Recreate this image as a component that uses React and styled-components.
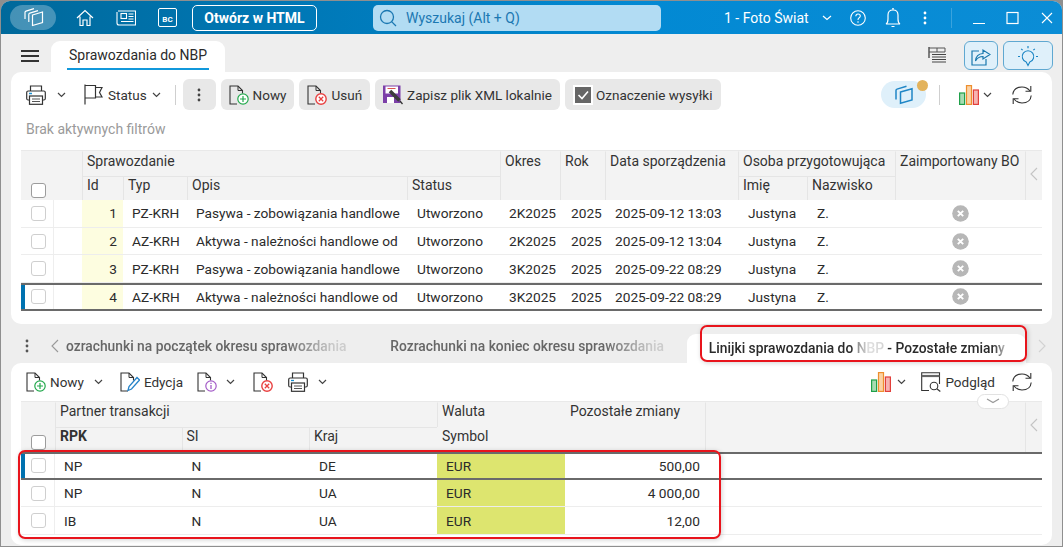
import React from "react";
import styled, { createGlobalStyle } from "styled-components";

const GlobalStyle = createGlobalStyle`
  html, body {
    margin: 0;
    padding: 0;
    height: 100%;
    overflow: hidden;
    background: #8f8f8f;
  }
  body {
    font-family: Roboto, "Liberation Sans", sans-serif;
    font-size: 14px;
    color: #2b2b2b;
  }
  * { box-sizing: border-box; }
`;

const Window = styled.div`
  position: relative;
  margin: 1px 1px 0 1px;
  height: 545px;
  background: #eeeeee;
  border-radius: 9px 9px 0 0;
  overflow: hidden;
  display: flex;
  flex-direction: column;
`;

const TitleBar = styled.header`
  height: 33px;
  flex: none;
  display: flex;
  align-items: center;
  padding-left: 9px;
  color: #fff;
  background: linear-gradient(90deg, #00699b 0%, #0079b8 30%, #0289d3 60%, #0b8dd6 100%);
`;

const LogoPill = styled.div`
  width: 46px;
  height: 25px;
  border-radius: 13px;
  background: rgba(255, 255, 255, 0.27);
  display: flex;
  align-items: center;
  justify-content: center;
`;

const TitleIcon = styled.div`
  margin-left: ${(p) => p.$ml}px;
  display: flex;
  align-items: center;
`;

const BcBadge = styled.div`
  margin-left: 22px;
  width: 19px;
  height: 19px;
  border: 1.3px solid #fff;
  border-radius: 2px;
  font-size: 8px;
  font-weight: 700;
  display: flex;
  align-items: flex-end;
  justify-content: center;
  padding-bottom: 2px;
`;

const HtmlButton = styled.button`
  margin-left: 15px;
  width: 125px;
  height: 26px;
  border: 1.5px solid #fff;
  border-radius: 5px;
  background: transparent;
  color: #fff;
  font: 700 14px Roboto, sans-serif;
  padding: 0;
`;

const SearchBox = styled.div`
  margin-left: 56px;
  width: 288px;
  height: 26px;
  border-radius: 5px;
  background: #b2dcf3;
  color: #1b78b2;
  display: flex;
  align-items: center;
  gap: 9px;
  padding-left: 6px;
`;

const Company = styled.span`
  margin-left: 63px;
  width: 83px;
  white-space: nowrap;
`;

const Divider = styled.div`
  width: 1px;
  height: 20px;
  margin-left: ${(p) => p.$ml}px;
  background: ${(p) => p.$color || "#cfcfcf"};
`;

const TabStrip = styled.div`
  height: 38px;
  flex: none;
  display: flex;
  align-items: flex-end;
  padding-left: 20px;
`;

const Hamburger = styled.div`
  width: 18px;
  height: 12px;
  margin-bottom: 10px;
  border-top: 2px solid #333;
  border-bottom: 2px solid #333;
  position: relative;
  &::after {
    content: "";
    position: absolute;
    left: 0;
    right: 0;
    top: 3px;
    height: 2px;
    background: #333;
  }
`;

const MainTab = styled.div`
  margin-left: 12px;
  width: 174px;
  height: 31px;
  background: #fff;
  border-radius: 9px 9px 0 0;
  padding: 6px 16px 0;
  display: flex;
  flex-direction: column;
  align-items: flex-start;
  white-space: nowrap;
  font-size: 14px;
  &::after {
    content: "";
    display: block;
    width: 142px;
    margin-top: 5px;
    height: 2px;
    background: #1198db;
  }
`;

const MainTabLabel = styled.span`
  padding-left: 2px;
`;

const StripActions = styled.div`
  margin-left: auto;
  margin-right: 9px;
  align-self: stretch;
  display: flex;
  align-items: center;
  padding-top: 5px;
`;

const SoftButton = styled.div`
  width: ${(p) => p.$w}px;
  height: 29px;
  margin-left: ${(p) => p.$ml}px;
  border: 1px solid #5fa8d1;
  border-radius: 6px;
  background: #dff0fa;
  display: flex;
  align-items: center;
  justify-content: center;
`;

const Panel = styled.section`
  position: relative;
  margin: 0 10px 0 10px;
  background: #fff;
  border-radius: 10px;
  flex: none;
  height: ${(p) => p.$h}px;
  padding: 0 10px;
  padding-top: ${(p) => p.$pt}px;
`;

const Toolbar = styled.div`
  height: ${(p) => p.$h}px;
  display: flex;
  align-items: center;
  padding-left: 5px;
  padding-right: 10px;
  font-size: 13.5px;
`;

const Tool = styled.div`
  display: flex;
  align-items: center;
  flex: none;
  height: 31px;
  gap: ${(p) => p.$gap ?? 4}px;
  margin-left: ${(p) => p.$ml ?? 0}px;
  padding: 0 ${(p) => (p.$filled ? 8 : 0)}px;
  background: ${(p) => (p.$filled ? "#e8e8e8" : "transparent")};
  border-radius: 6px;
  white-space: nowrap;
  color: #333;
`;

const DotsTool = styled(Tool)`
  width: 33px;
  justify-content: center;
`;

const RightTools = styled.div`
  margin-left: auto;
  display: flex;
  align-items: center;
`;

const SyncPill = styled.div`
  position: relative;
  width: 45px;
  height: 27px;
  border-radius: 14px;
  background: #dff0fa;
  display: flex;
  align-items: center;
  justify-content: center;
  &::after {
    content: "";
    position: absolute;
    right: -2px;
    top: -1px;
    width: 11px;
    height: 11px;
    border-radius: 50%;
    background: #e3b35c;
  }
`;

const FilterNote = styled.div`
  height: 40px;
  padding-left: 5px;
  padding-top: 11px;
  color: #9a9a9a;
  font-size: 14px;
`;

const HeadGrid = styled.div`
  display: grid;
  grid-template-columns: ${(p) => p.$cols};
  grid-template-rows: ${(p) => p.$rows};
  background: #f3f3f3;
  border-top: 1px solid #e9e9e9;
`;

const HeadCell = styled.div`
  grid-column: ${(p) => p.$col};
  grid-row: ${(p) => p.$row};
  padding: ${(p) => (p.$sub ? 0 : 0.5)}px 0 0 4px;
  border-left: 1.5px solid ${(p) => (p.$plain ? "transparent" : "#e5e5e5")};
  border-top: 1.5px solid ${(p) => (p.$sub ? "#e5e5e5" : "transparent")};
  white-space: nowrap;
  overflow: hidden;
  color: #333;
  font-weight: ${(p) => (p.$bold ? 700 : 400)};
  display: flex;
  align-items: ${(p) => (p.$bottom ? "flex-end" : "flex-start")};
`;

const ScrollCell = styled(HeadCell)`
  align-items: center;
  padding: 0 0 4px 4px;
`;

const Row = styled.div`
  position: relative;
  display: grid;
  grid-template-columns: ${(p) => p.$cols};
  height: 27.7px;
  align-items: stretch;
  font-size: 13.7px;
  border-bottom: 1px solid ${(p) => (p.$selected ? "#6a6a6a" : "#ededed")};
  ${(p) =>
    p.$selected &&
    `
    border-top: 2px solid #6a6a6a;
    border-bottom-width: 2px;
    &::before {
      content: "";
      position: absolute;
      left: 0;
      top: 0;
      bottom: 0;
      width: 4px;
      background: #0072b0;
    }
  `}
`;

const Cell = styled.div`
  display: flex;
  align-items: center;
  justify-content: ${(p) => (p.$right ? "flex-end" : p.$center ? "center" : "flex-start")};
  padding: 0 ${(p) => p.$pr ?? 0}px 0 ${(p) => p.$pl ?? 0}px;
  background: ${(p) => p.$bg || "transparent"};
  white-space: nowrap;
  overflow: hidden;
  border-right: ${(p) => (p.$line ? "1px solid #eeeeee" : "none")};
  color: #2b2b2b;
`;

const Check = styled.span`
  width: 15px;
  height: 15px;
  flex: none;
  border: 1px solid ${(p) => (p.$head ? "#9c9c9c" : "#cfcfcf")};
  border-radius: 3px;
  background: #fff;
`;

const HeadCheck = styled(Check)`
  margin: 0 0 2.5px 5px;
`;

const SubTabs = styled.div`
  height: 38.5px;
  flex: none;
  display: flex;
  align-items: flex-end;
  padding-left: 21px;
  color: #666;
  font-size: 13.8px;
  font-weight: 500;
`;

const SubTabIcon = styled.div`
  align-self: center;
  margin-top: 5px;
  margin-left: ${(p) => p.$ml}px;
  display: flex;
  align-items: center;
`;

const SubTabLabel = styled.div`
  align-self: center;
  margin-top: 5px;
  white-space: nowrap;
  margin-left: ${(p) => p.$ml}px;
  mask-image: linear-gradient(90deg, #000 78%, rgba(0, 0, 0, 0.25) 96%);
`;

const ActiveTab = styled.div`
  margin-left: 23px;
  width: 339px;
  height: 29px;
  background: #fff;
  border-radius: 9px 9px 0 0;
  padding: 0 0 0 22px;
  display: flex;
  align-items: center;
  white-space: nowrap;
  color: #2b2b2b;
`;

const ActiveLabel = styled.span`
  mask-image: linear-gradient(
    90deg,
    #000 48%,
    rgba(0, 0, 0, 0.55) 50%,
    rgba(0, 0, 0, 0.15) 54%,
    rgba(0, 0, 0, 0.2) 59%,
    #000 60%,
    #000 96%,
    rgba(0, 0, 0, 0.3) 100%
  );
`;

const CollapsePill = styled.div`
  position: absolute;
  left: 966px;
  top: 31px;
  width: 32px;
  height: 15px;
  border: 1px solid #e2e2e2;
  border-radius: 8px;
  background: #fff;
  display: flex;
  align-items: center;
  justify-content: center;
`;

const Annotation = styled.div`
  position: absolute;
  left: ${(p) => p.$x}px;
  top: ${(p) => p.$y}px;
  width: ${(p) => p.$w}px;
  height: ${(p) => p.$h}px;
  border: 2px solid #e8141c;
  border-radius: 7px;
  box-shadow: 1px 1px 5px rgba(0, 0, 0, 0.18);
  pointer-events: none;
`;

/* icons */
const Svg = ({ w = 20, h = 20, children, ...rest }) => (
  <svg width={w} height={h} viewBox={`0 0 ${w} ${h}`} fill="none" {...rest}>
    {children}
  </svg>
);

const Chevron = ({ color = "#444", w = 9 }) => (
  <Svg w={w} h={6}>
    <path d={`M1 1 L${w / 2} 4.5 L${w - 1} 1`} stroke={color} strokeWidth="1.2" />
  </Svg>
);

const Side = ({ dir = "left", color = "#c4c4c4" }) => (
  <Svg w={8} h={14}>
    <path d={dir === "left" ? "M7 1 L1 7 L7 13" : "M1 1 L7 7 L1 13"} stroke={color} strokeWidth="1.1" />
  </Svg>
);

const LogoIcon = () => (
  <Svg w={21} h={21}>
    <path d="M9.5 8 L19.5 5 V15.5 L9.5 18.5 Z" stroke="#fff" strokeWidth="1.2" />
    <path d="M5.8 15 V7.5 Q5.8 6.4 6.8 6.1 L15 3.6" stroke="#fff" strokeWidth="1.2" />
    <path d="M2 12 V5.5 Q2 4.4 3 4.1 L11 1.6" stroke="#fff" strokeWidth="1.2" />
  </Svg>
);

const SyncIcon = () => (
  <Svg w={21} h={21}>
    <path d="M7.5 8 L19 4.8 V16 L7.5 19.2 Z" stroke="#1f86c6" strokeWidth="1.5" />
    <path d="M3 15.5 V6.5 Q3 5.4 4 5.1 L13.5 2.2" stroke="#1f86c6" strokeWidth="1.5" />
  </Svg>
);

const HomeIcon = () => (
  <Svg w={18} h={18}>
    <path d="M1 9 L9 1.5 L17 9 M4 7.5 V16.5 H7 V11 H11 V16.5 H14 V7.5" stroke="#fff" strokeWidth="1.2" />
  </Svg>
);

const NewsIcon = () => (
  <Svg w={20} h={17}>
    <path d="M2 2 H19.5 V16 H3 Q1 16 1 14 V3" stroke="#fff" strokeWidth="1.1" />
    <rect x="5" y="4.5" width="5.5" height="5" stroke="#fff" strokeWidth="1.1" />
    <path d="M12.5 5 H17.5 M12.5 7.5 H17.5 M12.5 10 H17.5 M5 12.5 H17.5" stroke="#fff" strokeWidth="1.1" />
  </Svg>
);

const SearchIcon = () => (
  <Svg w={18} h={18}>
    <circle cx="8" cy="8" r="6.5" stroke="#1b78b2" strokeWidth="1.3" />
    <path d="M12.6 12.6 L17 17" stroke="#1b78b2" strokeWidth="1.3" />
  </Svg>
);

const HelpIcon = () => (
  <Svg w={16} h={16}>
    <circle cx="8" cy="8" r="7.3" stroke="#fff" strokeWidth="1.1" />
    <path d="M5.8 6.2 Q6 4 8 4 Q10.3 4 10.3 6 Q10.3 7.2 9 7.9 Q8 8.5 8 10" stroke="#fff" strokeWidth="1.1" />
    <circle cx="8" cy="12" r="0.8" fill="#fff" />
  </Svg>
);

const BellIcon = () => (
  <Svg w={16} h={20}>
    <path d="M1 16 Q3 15 3 11 V7 Q3 2 8 2 Q13 2 13 7 V11 Q13 15 15 16 Z" stroke="#fff" strokeWidth="1.2" />
    <path d="M7 0.8 H9 M6.5 18.5 H9.5" stroke="#fff" strokeWidth="1.2" />
  </Svg>
);

const DotsIcon = ({ color = "#fff" }) => (
  <Svg w={4} h={14}>
    <circle cx="2" cy="2" r="1.4" fill={color} />
    <circle cx="2" cy="7" r="1.4" fill={color} />
    <circle cx="2" cy="12" r="1.4" fill={color} />
  </Svg>
);

const WindowIcons = () => (
  <>
    <TitleIcon $ml={21}>
      <Svg w={12} h={14}>
        <path d="M0 12.5 H12" stroke="#fff" strokeWidth="1.1" />
      </Svg>
    </TitleIcon>
    <TitleIcon $ml={21}>
      <Svg w={13} h={14}>
        <rect x="1" y="1.5" width="11" height="11" stroke="#fff" strokeWidth="1.2" />
      </Svg>
    </TitleIcon>
    <TitleIcon $ml={22}>
      <Svg w={12} h={12}>
        <path d="M1 1 L11 11 M11 1 L1 11" stroke="#fff" strokeWidth="1.1" />
      </Svg>
    </TitleIcon>
  </>
);

const ColumnsIcon = () => (
  <Svg w={18} h={17}>
    <path d="M1 0 V11" stroke="#333" strokeWidth="1.2" />
    <path d="M1 1 H17 V5 H1" stroke="#555" strokeWidth="1" />
    <path d="M9 1 V5" stroke="#555" strokeWidth="1" />
    <path d="M4 7.5 H18 M4 10 H18 M4 12.5 H18 M4 15 H18" stroke="#444" strokeWidth="1.2" />
  </Svg>
);

const ShareIcon = () => (
  <Svg w={20} h={20}>
    <path d="M8 5 H1 V19 H15 V13" stroke="#1877ad" strokeWidth="1.2" />
    <path d="M4.5 15 Q5 8 12 7.5 V4 L19 8.5 L12 13 V10.5 Q7 10.5 4.5 15 Z" stroke="#1877ad" strokeWidth="1.2" />
  </Svg>
);

const LampIcon = () => (
  <Svg w={22} h={22}>
    <path d="M11 20.5 L9.2 17 A5.8 5.8 0 1 1 12.8 17 Z" stroke="#1b85c4" strokeWidth="1.1" />
    <path d="M11 1 V3.2 M4.2 3.8 L5.6 5.2 M17.8 3.8 L16.4 5.2 M1 11.5 H3 M19 11.5 H21" stroke="#1b85c4" strokeWidth="1.2" />
  </Svg>
);

const PrintIcon = () => (
  <Svg w={20} h={20}>
    <path d="M4.5 6 V1 H15.5 V6" stroke="#333" strokeWidth="1.2" />
    <rect x="0.7" y="6" width="18.6" height="9" rx="1.5" stroke="#333" strokeWidth="1.2" />
    <rect x="3.5" y="11" width="13" height="8.3" fill="#fff" stroke="#333" strokeWidth="1.2" />
    <path d="M6 14 H14 M6 16.5 H14" stroke="#555" strokeWidth="1" />
    <path d="M3 8.5 H6" stroke="#1a8fd1" strokeWidth="1.3" />
  </Svg>
);

const FlagIcon = () => (
  <Svg w={19} h={21}>
    <path d="M1 0.5 V20.5" stroke="#333" strokeWidth="1.2" />
    <path d="M1 1.5 H11.5 V14 H1" stroke="#333" strokeWidth="1.2" />
    <path d="M11.5 3.5 H18 L15.5 8.5 L18 13 H11.5" stroke="#333" strokeWidth="1.2" />
  </Svg>
);

const DocIcon = ({ badge }) => (
  <Svg w={20} h={20}>
    <path d="M8 19 H1 V1 H9 L13.5 5.5 V8.5" stroke="#333" strokeWidth="1.1" />
    <path d="M9 1 V5.5 H13.5" stroke="#333" strokeWidth="1" />
    {badge === "add" && (
      <>
        <circle cx="14" cy="14" r="5.2" fill="#fff" stroke="#22a84c" strokeWidth="1.2" />
        <path d="M14 11 V17 M11 14 H17" stroke="#22a84c" strokeWidth="1.2" />
      </>
    )}
    {badge === "remove" && (
      <>
        <circle cx="14" cy="14" r="5.2" fill="#fff" stroke="#e84040" strokeWidth="1.4" />
        <path d="M11.8 11.8 L16.2 16.2 M16.2 11.8 L11.8 16.2" stroke="#e84040" strokeWidth="1.3" />
      </>
    )}
    {badge === "info" && (
      <>
        <circle cx="14" cy="14" r="5.2" fill="#fff" stroke="#a45cc8" strokeWidth="1.2" />
        <path d="M14 13 V17 M14 10.8 V11.9" stroke="#a45cc8" strokeWidth="1.3" />
      </>
    )}
    {badge === "edit" && (
      <path d="M8 18.5 L9 14.5 L17 5.5 L19.5 8 L11.5 17 Z" fill="#fff" stroke="#2583c9" strokeWidth="1.3" />
    )}
  </Svg>
);

const SaveXmlIcon = () => (
  <Svg w={20} h={20}>
    <rect x="0" y="0.5" width="17.5" height="17.5" fill="#7c3fa8" />
    <rect x="2.5" y="1.5" width="12.5" height="7" fill="#fff" />
    <path d="M4.5 3.5 H12.5" stroke="#d9534f" strokeWidth="1" />
    <rect x="4" y="12" width="7" height="6" fill="#fff" />
    <path d="M7 6 L16.5 15.5" stroke="#3c3c3c" strokeWidth="3.6" />
    <path d="M17 16 L19.5 19" stroke="#333" strokeWidth="1.3" />
  </Svg>
);

const CheckedIcon = () => (
  <Svg w={20} h={20}>
    <rect width="20" height="20" fill="#fff" />
    <rect x="2" y="2" width="16" height="16" fill="#666" />
    <path d="M5.5 10 L9 13.5 L15 6.5" stroke="#fff" strokeWidth="1.6" />
  </Svg>
);

const ChartIcon = () => (
  <Svg w={20} h={20}>
    <rect x="0.6" y="8" width="5" height="11.4" fill="#a6dcb2" stroke="#1fa04a" strokeWidth="1.2" />
    <rect x="7.5" y="0.6" width="5" height="18.8" fill="#fbd3a6" stroke="#ee8f2e" strokeWidth="1.2" />
    <rect x="14.4" y="5" width="5" height="14.4" fill="#f6b3b1" stroke="#e23f3b" strokeWidth="1.2" />
  </Svg>
);

const RefreshIcon = () => (
  <Svg w={20} h={20}>
    <path d="M0.8 9.5 Q1.5 2 10 2 Q15 2 18 6" stroke="#333" strokeWidth="1.1" />
    <path d="M18.8 1 V6.3 H13.5" stroke="#333" strokeWidth="1.1" />
    <path d="M19.2 10.5 Q18.5 18 10 18 Q5 18 2 14" stroke="#333" strokeWidth="1.1" />
    <path d="M1.2 19 V13.7 H6.5" stroke="#333" strokeWidth="1.1" />
  </Svg>
);

const PreviewIcon = () => (
  <Svg w={20} h={20}>
    <path d="M8 18.5 H0.7 V0.7 H18.5 V12" stroke="#333" strokeWidth="1.1" />
    <path d="M0.7 4 H18.5" stroke="#666" strokeWidth="2.2" />
    <circle cx="13" cy="14" r="3.8" stroke="#333" strokeWidth="1.1" />
    <path d="M15.8 16.8 L19.3 19.5" stroke="#333" strokeWidth="1.2" />
  </Svg>
);

const CrossDisc = () => (
  <Svg w={17} h={17}>
    <circle cx="8.5" cy="8.5" r="8.3" fill="#b7b7b7" />
    <path d="M5.8 5.8 L11.2 11.2 M11.2 5.8 L5.8 11.2" stroke="#fff" strokeWidth="1.9" />
  </Svg>
);

const topCols = "33px 28px 41px 64px 220px 93px 60px 45px 133px 69px 88px 130px 17px";
const bottomCols = "34px 126.5px 127.5px 128px 128px 140px 320px 17px";

const reports = [
  { id: 1, typ: "PZ-KRH", opis: "Pasywa - zobowiązania handlowe", okres: "2K2025", data: "2025-09-12 13:03" },
  { id: 2, typ: "AZ-KRH", opis: "Aktywa - należności handlowe od", okres: "2K2025", data: "2025-09-12 13:04" },
  { id: 3, typ: "PZ-KRH", opis: "Pasywa - zobowiązania handlowe", okres: "3K2025", data: "2025-09-22 08:29" },
  { id: 4, typ: "AZ-KRH", opis: "Aktywa - należności handlowe od", okres: "3K2025", data: "2025-09-22 08:29", selected: true },
];

const lines = [
  { rpk: "NP", si: "N", kraj: "DE", kwota: "500,00", selected: true },
  { rpk: "NP", si: "N", kraj: "UA", kwota: "4 000,00" },
  { rpk: "IB", si: "N", kraj: "UA", kwota: "12,00" },
];

export default function App() {
  return (
    <>
      <GlobalStyle />
      <Window>
        <TitleBar>
          <LogoPill>
            <LogoIcon />
          </LogoPill>
          <TitleIcon $ml={20}>
            <HomeIcon />
          </TitleIcon>
          <TitleIcon $ml={22}>
            <NewsIcon />
          </TitleIcon>
          <BcBadge>BC</BcBadge>
          <HtmlButton>Otwórz w HTML</HtmlButton>
          <SearchBox>
            <SearchIcon />
            <span>Wyszukaj (Alt + Q)</span>
          </SearchBox>
          <Company>1 - Foto Świat</Company>
          <TitleIcon $ml={15}>
            <Chevron color="#fff" w={10} />
          </TitleIcon>
          <TitleIcon $ml={18}>
            <HelpIcon />
          </TitleIcon>
          <TitleIcon $ml={19}>
            <BellIcon />
          </TitleIcon>
          <TitleIcon $ml={22}>
            <DotsIcon />
          </TitleIcon>
          <Divider $ml={24} $color="rgba(255,255,255,0.2)" />
          <WindowIcons />
        </TitleBar>

        <TabStrip>
          <Hamburger />
          <MainTab>
            <MainTabLabel>Sprawozdania do NBP</MainTabLabel>
          </MainTab>
          <StripActions>
            <TitleIcon $ml={0}>
              <ColumnsIcon />
            </TitleIcon>
            <SoftButton $w={34} $ml={18}>
              <ShareIcon />
            </SoftButton>
            <SoftButton $w={50} $ml={5}>
              <LampIcon />
            </SoftButton>
          </StripActions>
        </TabStrip>

        <Panel $h={252} $pt={7}>
          <Toolbar $h={31}>
            <Tool $gap={11}>
              <PrintIcon />
              <Chevron />
            </Tool>
            <Tool $ml={18} $gap={5}>
              <FlagIcon />
              Status
              <Chevron />
            </Tool>
            <Divider $ml={14} />
            <DotsTool $ml={7} $filled>
              <DotsIcon color="#444" />
            </DotsTool>
            <Tool $ml={5} $filled>
              <DocIcon badge="add" />
              Nowy
            </Tool>
            <Tool $ml={5} $filled>
              <DocIcon badge="remove" />
              Usuń
            </Tool>
            <Tool $ml={5} $filled>
              <SaveXmlIcon />
              Zapisz plik XML lokalnie
            </Tool>
            <Tool $ml={5} $filled $gap={3}>
              <CheckedIcon />
              Oznaczenie wysyłki
            </Tool>
            <RightTools>
              <SyncPill>
                <SyncIcon />
              </SyncPill>
              <Divider $ml={13} />
              <Tool $ml={19} $gap={4}>
                <ChartIcon />
                <Chevron />
              </Tool>
              <Tool $ml={20}>
                <RefreshIcon />
              </Tool>
            </RightTools>
          </Toolbar>
          <FilterNote>Brak aktywnych filtrów</FilterNote>

          <HeadGrid $cols={topCols} $rows="25px 24px">
            <HeadCell $col="1 / 3" $row="1 / 3" $plain $bottom>
              <HeadCheck $head />
            </HeadCell>
            <HeadCell $col="3 / 7" $row="1">Sprawozdanie</HeadCell>
            <HeadCell $col="3" $row="2" $sub>Id</HeadCell>
            <HeadCell $col="4" $row="2" $sub>Typ</HeadCell>
            <HeadCell $col="5" $row="2" $sub>Opis</HeadCell>
            <HeadCell $col="6" $row="2" $sub>Status</HeadCell>
            <HeadCell $col="7" $row="1 / 3">Okres</HeadCell>
            <HeadCell $col="8" $row="1 / 3">Rok</HeadCell>
            <HeadCell $col="9" $row="1 / 3">Data sporządzenia</HeadCell>
            <HeadCell $col="10 / 12" $row="1">Osoba przygotowująca</HeadCell>
            <HeadCell $col="10" $row="2" $sub>Imię</HeadCell>
            <HeadCell $col="11" $row="2" $sub>Nazwisko</HeadCell>
            <HeadCell $col="12" $row="1 / 3">Zaimportowany BO</HeadCell>
            <ScrollCell $col="13" $row="1 / 3">
              <Side />
            </ScrollCell>
          </HeadGrid>
          {reports.map((r) => (
            <Row key={r.id} $cols={topCols} $selected={r.selected}>
              <Cell $pl={10} $line>
                <Check />
              </Cell>
              <Cell />
              <Cell $right $pr={6} $bg="#fdfde0">{r.id}</Cell>
              <Cell $pl={9}>{r.typ}</Cell>
              <Cell $pl={9}>{r.opis}</Cell>
              <Cell $pl={10}>Utworzono</Cell>
              <Cell $pl={9}>{r.okres}</Cell>
              <Cell $pl={11}>2025</Cell>
              <Cell $pl={10}>{r.data}</Cell>
              <Cell $pl={10}>Justyna</Cell>
              <Cell $pl={10}>Z.</Cell>
              <Cell $center>
                <CrossDisc />
              </Cell>
              <Cell />
            </Row>
          ))}
        </Panel>

        <SubTabs>
          <SubTabIcon $ml={3}>
            <DotsIcon color="#555" />
          </SubTabIcon>
          <SubTabIcon $ml={22}>
            <Side color="#999" />
          </SubTabIcon>
          <SubTabLabel $ml={7}>ozrachunki na początek okresu sprawozdania</SubTabLabel>
          <SubTabLabel $ml={44}>Rozrachunki na koniec okresu sprawozdania</SubTabLabel>
          <ActiveTab>
            <ActiveLabel>Linijki sprawozdania do NBP - Pozostałe zmiany</ActiveLabel>
          </ActiveTab>
          <SubTabIcon $ml={12}>
            <Side dir="right" color="#d2d2d2" />
          </SubTabIcon>
        </SubTabs>

        <Panel $h={182} $pt={0}>
          <Toolbar $h={38}>
            <Tool $gap={4}>
              <DocIcon badge="add" />
              Nowy
            </Tool>
            <Tool $ml={10}>
              <Chevron />
            </Tool>
            <Tool $ml={17}>
              <DocIcon badge="edit" />
              Edycja
            </Tool>
            <Tool $ml={14} $gap={9}>
              <DocIcon badge="info" />
              <Chevron />
            </Tool>
            <Tool $ml={18}>
              <DocIcon badge="remove" />
            </Tool>
            <Tool $ml={15} $gap={10}>
              <PrintIcon />
              <Chevron />
            </Tool>
            <RightTools>
              <Tool $gap={6}>
                <ChartIcon />
                <Chevron />
              </Tool>
              <Tool $ml={15}>
                <PreviewIcon />
                Podgląd
              </Tool>
              <Tool $ml={17}>
                <RefreshIcon />
              </Tool>
            </RightTools>
          </Toolbar>

          <HeadGrid $cols={bottomCols} $rows="25px 25.5px">
            <HeadCell $col="1" $row="1 / 3" $plain $bottom>
              <HeadCheck $head />
            </HeadCell>
            <HeadCell $col="2 / 5" $row="1">Partner transakcji</HeadCell>
            <HeadCell $col="2" $row="2" $sub $bold>RPK</HeadCell>
            <HeadCell $col="3" $row="2" $sub>SI</HeadCell>
            <HeadCell $col="4" $row="2" $sub>Kraj</HeadCell>
            <HeadCell $col="5" $row="1">Waluta</HeadCell>
            <HeadCell $col="5" $row="2" $plain>Symbol</HeadCell>
            <HeadCell $col="6" $row="1 / 3" $plain>Pozostałe zmiany</HeadCell>
            <HeadCell $col="7" $row="1 / 3" />
            <ScrollCell $col="8" $row="1 / 3">
              <Side />
            </ScrollCell>
          </HeadGrid>
          {lines.map((l, i) => (
            <Row key={i} $cols={bottomCols} $selected={l.selected}>
              <Cell $pl={10} $line>
                <Check />
              </Cell>
              <Cell $pl={9}>{l.rpk}</Cell>
              <Cell $pl={10}>{l.si}</Cell>
              <Cell $pl={10}>{l.kraj}</Cell>
              <Cell $pl={9} $bg="#dde56f">EUR</Cell>
              <Cell $right $pr={5}>{l.kwota}</Cell>
              <Cell />
              <Cell />
            </Row>
          ))}
          <CollapsePill>
            <Chevron color="#999" w={14} />
          </CollapsePill>
        </Panel>

        <Annotation $x={699} $y={324} $w={327} $h={37} />
        <Annotation $x={17} $y={449} $w={703} $h={89} />
      </Window>
    </>
  );
}
